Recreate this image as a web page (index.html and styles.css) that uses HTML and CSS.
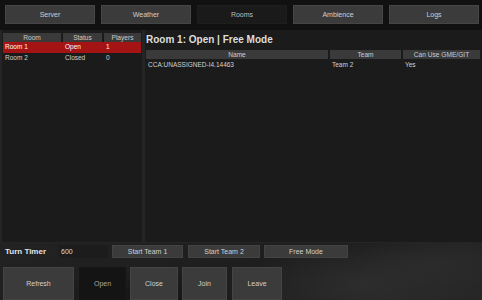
FILE: index.html
```html
<!DOCTYPE html>
<html lang="en">
<head>
  <meta charset="UTF-8" />
  <title>Rooms</title>
  <link rel="stylesheet" href="styles.css">
</head>
<body>

  <div class="screen">
    <nav class="tabs">
      <button class="tab">Server</button>
      <button class="tab">Weather</button>
      <button class="tab active">Rooms</button>
      <button class="tab">Ambience</button>
      <button class="tab">Logs</button>
    </nav>

    <div class="main">
      <section class="rooms">
        <div class="room-grid head">
          <div>Room</div>
          <div>Status</div>
          <div>Players</div>
        </div>
        <div class="room-grid row selected">
          <div>Room 1</div>
          <div>Open</div>
          <div>1</div>
        </div>
        <div class="room-grid row">
          <div>Room 2</div>
          <div>Closed</div>
          <div>0</div>
        </div>
      </section>

      <section class="detail">
        <h1>Room 1: Open | Free Mode</h1>
        <div class="player-grid head">
          <div>Name</div>
          <div>Team</div>
          <div>Can Use GME/GIT</div>
        </div>
        <div class="player-grid row">
          <div>CCA:UNASSIGNED-I4.14463</div>
          <div>Team 2</div>
          <div>Yes</div>
        </div>
      </section>
    </div>

    <div class="controls">
      <div class="timer-row">
        <label class="timer-label" for="timer">Turn Timer</label>
        <input class="timer-input" id="timer" type="text" value="600" />
        <button class="small-btn team1">Start Team 1</button>
        <button class="small-btn team2">Start Team 2</button>
        <button class="small-btn free">Free Mode</button>
      </div>
      <div class="actions">
        <button class="big-btn refresh">Refresh</button>
        <button class="big-btn open" disabled>Open</button>
        <button class="big-btn close">Close</button>
        <button class="big-btn join">Join</button>
        <button class="big-btn leave">Leave</button>
      </div>
    </div>
  </div>

</body>
</html>
```

FILE: styles.css
```css
body {
  margin: 0;
  background: #111;
  font-family: 'Liberation Sans', Arial, sans-serif;
  font-size: 7px;
  color: #d2d2d2;
}

button,
input {
  font-family: 'Liberation Sans', Arial, sans-serif;
  font-size: 7px;
}

.screen {
  width: 482px;
  height: 300px;
  display: flex;
  flex-direction: column;
  overflow: hidden;
}

/* top tabs */
.tabs {
  height: 30px;
  box-sizing: border-box;
  padding: 5px 3px 0 5px;
  display: flex;
  gap: 6px;
  background: #111;
}

.tab {
  flex: 1;
  height: 19px;
  padding: 0;
  background: #3b3b3b;
  border: 1px solid #454545;
  color: #cfcfcf;
}

.tab.active {
  background: #1a1a1a;
  border-color: #1e1e1e;
  color: #bdbdbd;
}

/* panels */
.main {
  height: 212px;
  display: flex;
  gap: 3px;
  padding: 0 0 1px 2px;
  background: #252525;
}

.rooms {
  width: 140px;
  box-sizing: border-box;
  padding: 3px 1px 0 1px;
  background: #1b1b1b;
}

.detail {
  flex: 1;
  box-sizing: border-box;
  padding: 0 2px 0 1px;
  background: #1b1b1b;
}

.detail h1 {
  margin: 0;
  height: 20px;
  line-height: 20px;
  font-size: 10px;
  font-weight: bold;
  color: #dedede;
}

.room-grid {
  display: grid;
  grid-template-columns: 58px 39px 37px;
  gap: 2px;
}

.player-grid {
  display: grid;
  grid-template-columns: 182px 71px 77px;
  gap: 2px;
}

.head div {
  height: 9px;
  line-height: 9px;
  font-size: 6.6px;
  text-align: center;
  background: #3a3a3a;
  color: #cdcdcd;
}

.row {
  height: 10px;
  line-height: 10px;
  font-size: 6.5px;
}

.row div {
  padding-left: 2px;
  white-space: nowrap;
}

.room-grid.row {
  height: 10.5px;
  line-height: 10.5px;
}

.row.selected {
  background: #a51414;
  color: #fff;
}

.player-grid.row {
  margin-top: 1px;
}

/* bottom controls */
.controls {
  flex: 1;
  padding: 2px 0 0 3px;
  background:
    radial-gradient(ellipse 120px 40px at 75% 70%, rgba(70, 70, 70, 0.3), transparent),
    radial-gradient(ellipse 90px 30px at 92% 30%, rgba(55, 55, 55, 0.35), transparent),
    radial-gradient(ellipse 100px 30px at 30% 95%, rgba(8, 8, 8, 0.4), transparent),
    linear-gradient(160deg, #222, #1e1e1e 50%, #272727);
}

.timer-row {
  height: 13px;
  display: flex;
  align-items: center;
}

.timer-label {
  width: 54px;
  padding-left: 2px;
  box-sizing: border-box;
  font-size: 8px;
  font-weight: bold;
  color: #e2e2e2;
}

.timer-input {
  width: 49px;
  height: 13px;
  box-sizing: border-box;
  padding: 0 0 0 2px;
  margin-left: 2px;
  border: none;
  background: #1c1c1c;
  color: #dcdcdc;
}

.small-btn {
  height: 13px;
  padding: 0;
  background: #3b3b3b;
  border: 1px solid #434343;
  color: #d0d0d0;
}

.team1 { width: 71px; margin-left: 4px; }
.team2 { width: 72px; margin-left: 5px; }
.free { width: 84px; margin-left: 4px; }

.actions {
  margin-top: 9px;
  display: flex;
}

.big-btn {
  height: 33px;
  padding: 0;
  background: #3b3b3b;
  border: 1px solid #444;
  color: #d0d0d0;
}

.big-btn.open {
  background: #141414;
  border-color: #161616;
  color: #a8a8a8;
}

.refresh { width: 71px; }
.open { width: 47px; margin-left: 5px; }
.close { width: 48px; margin-left: 4px; }
.join { width: 45px; margin-left: 4px; }
.leave { width: 50px; margin-left: 5px; }
```
